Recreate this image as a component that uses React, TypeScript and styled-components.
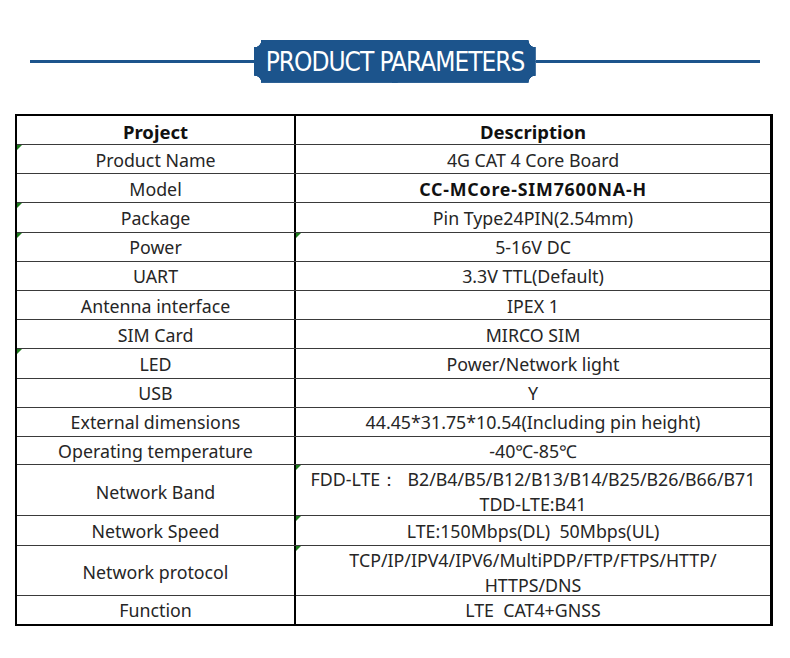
import React from 'react';
import styled, { createGlobalStyle } from 'styled-components';

const GlobalStyle = createGlobalStyle`
  html, body {
    margin: 0;
    padding: 0;
    background: #ffffff;
  }
  body {
    font-family: "Noto Sans", "Open Sans", sans-serif;
    color: #1e1e1e;
  }
`;

const Page = styled.div`
  width: 790px;
  padding-top: 40px;
`;

const TitleBar = styled.div`
  display: flex;
  align-items: center;
  padding: 0 30px;
`;

const TitleLine = styled.div`
  flex: 1;
  height: 3px;
  background: #1c548c;
`;

const Badge = styled.div`
  width: 282px;
  height: 43px;
  display: flex;
  align-items: center;
  justify-content: center;
  color: #ffffff;
  font-family: "Liberation Sans Narrow", "DejaVu Sans Condensed", "Open Sans", sans-serif;
  font-size: 26px;
  letter-spacing: -1px;
  background:
    radial-gradient(circle at top left, transparent 7px, #1c548c 7.5px) top left,
    radial-gradient(circle at top right, transparent 7px, #1c548c 7.5px) top right,
    radial-gradient(circle at bottom left, transparent 7px, #1c548c 7.5px) bottom left,
    radial-gradient(circle at bottom right, transparent 7px, #1c548c 7.5px) bottom right;
  background-size: 51% 51%;
  background-repeat: no-repeat;
`;

const Table = styled.div`
  margin: 31px 0 0 15px;
  width: 753px;
  border-top: 2px solid #000;
  border-left: 2px solid #000;
  border-right: 3px solid #000;
  border-bottom: 2px solid #000;
  display: flex;
  flex-direction: column;
`;

const Row = styled.div<{ $h: number; $last?: boolean }>`
  display: grid;
  grid-template-columns: 279px 1fr;
  height: ${p => p.$h}px;
  box-sizing: border-box;
  border-bottom: ${p => (p.$last ? 'none' : '1px solid #3a3a3a')};
`;

const Cell = styled.div<{ $left?: boolean; $mark?: boolean; $head?: boolean; $bold?: boolean }>`
  position: relative;
  display: flex;
  align-items: center;
  justify-content: center;
  text-align: center;
  white-space: pre;
  font-size: ${p => (p.$head ? '18.5px' : '17.8px')};
  font-weight: ${p => (p.$head || p.$bold ? 700 : 400)};
  letter-spacing: ${p => (p.$bold ? '0.8px' : '0')};
  line-height: 25px;
  color: ${p => (p.$head || p.$bold ? '#111' : '#262626')};
  border-right: ${p => (p.$left ? '2px solid #000' : 'none')};
  padding-top: 2px;

  &::before {
    content: '';
    display: ${p => (p.$mark ? 'block' : 'none')};
    position: absolute;
    left: 0;
    top: 0;
    width: 0;
    height: 0;
    border-top: 5px solid #1f7d1f;
    border-right: 5px solid transparent;
  }
`;

type Param = {
  name: string;
  value: string;
  h?: number;
  markL?: boolean;
  markR?: boolean;
  bold?: boolean;
};

const params: Param[] = [
  { name: 'Product Name', value: '4G CAT 4 Core Board', markL: true },
  { name: 'Model', value: 'CC-MCore-SIM7600NA-H', bold: true },
  { name: 'Package', value: 'Pin Type24PIN(2.54mm)', markL: true },
  { name: 'Power', value: '5-16V DC', markL: true, markR: true },
  { name: 'UART', value: '3.3V TTL(Default)' },
  { name: 'Antenna interface', value: 'IPEX 1' },
  { name: 'SIM Card', value: 'MIRCO SIM' },
  { name: 'LED', value: 'Power/Network light', markL: true },
  { name: 'USB', value: 'Y' },
  { name: 'External dimensions', value: '44.45*31.75*10.54(Including pin height)' },
  { name: 'Operating temperature', value: '-40℃-85℃', h: 28.5 },
  {
    name: 'Network Band',
    value: 'FDD-LTE：  B2/B4/B5/B12/B13/B14/B25/B26/B66/B71\nTDD-LTE:B41',
    h: 51,
    markR: true,
  },
  { name: 'Network Speed', value: 'LTE:150Mbps(DL)  50Mbps(UL)', markR: true },
  {
    name: 'Network protocol',
    value: 'TCP/IP/IPV4/IPV6/MultiPDP/FTP/FTPS/HTTP/\nHTTPS/DNS',
    h: 50,
    markR: true,
  },
  { name: 'Function', value: 'LTE  CAT4+GNSS', h: 28 },
];

const App: React.FC = () => {
  return (
    <Page>
      <GlobalStyle />
      <TitleBar>
        <TitleLine />
        <Badge>PRODUCT PARAMETERS</Badge>
        <TitleLine />
      </TitleBar>

      <Table>
        <Row $h={29}>
          <Cell $left $head>Project</Cell>
          <Cell $head>Description</Cell>
        </Row>
        {params.map((p, i) => (
          <Row key={p.name} $h={p.h ?? 29.2} $last={i === params.length - 1}>
            <Cell $left $mark={p.markL}>{p.name}</Cell>
            <Cell $mark={p.markR} $bold={p.bold}>{p.value}</Cell>
          </Row>
        ))}
      </Table>
    </Page>
  );
};

export default App;
